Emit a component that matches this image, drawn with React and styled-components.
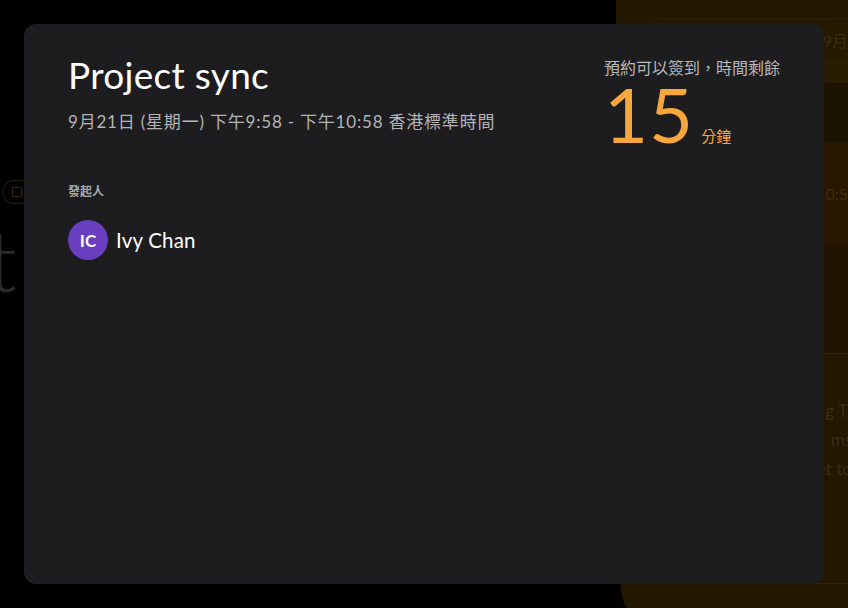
import React from 'react'
import styled, { createGlobalStyle } from 'styled-components'

const GlobalStyle = createGlobalStyle`
    html, body {
        margin: 0;
        padding: 0;
        background: #000;
    }
    body {
        font-family: Lato, "Noto Sans CJK TC", sans-serif;
    }
`;

const Scene = styled.div`
    width: 848px;
    height: 608px;
    display: flex;
    overflow: hidden;
    position: relative;
    background: #000;
`;

const MainArea = styled.div`
    flex: 1;
    display: flex;
    flex-direction: column;
    padding-top: 180px;
`;

const Pill = styled.div`
    width: 40px;
    height: 24px;
    margin-left: 2px;
    border: 1px solid #2a1f05;
    border-radius: 12px;
    display: flex;
    align-items: center;
    padding-left: 9px;
    box-sizing: border-box;
`;

const PillIcon = styled.div`
    width: 8px;
    height: 8px;
    border: 1.5px solid #3a2c0c;
    border-radius: 1px;
`;

const GhostText = styled.div`
    font-family: Lato, sans-serif;
    font-size: 84px;
    font-weight: 300;
    color: #2c2c2c;
    margin-left: -12px;
    line-height: 1;
    margin-top: 14px;
`;

const SidePanel = styled.div`
    width: 232px;
    background: #241700;
    border-bottom-left-radius: 12px 100px;
    display: flex;
    flex-direction: column;
    padding: 18px 0 0 28px;
    box-sizing: border-box;
    font-family: Lato, "Noto Sans CJK TC", sans-serif;
`;

const SideCard = styled.div`
    flex: 1;
    border: 1px solid #2e2108;
    border-right: none;
    border-radius: 16px 0 0 16px;
    margin-bottom: 24px;
    display: flex;
    flex-direction: column;
    overflow: hidden;
`;

const SideBand = styled.div`
    height: ${p => p.h}px;
    background: ${p => p.bg};
    color: #3a2c12;
    font-size: 16px;
    display: flex;
    align-items: center;
    justify-content: flex-end;
    white-space: nowrap;
`;

const SideLines = styled.div`
    border-top: 1px solid #33260d;
    padding-top: 46px;
    display: flex;
    flex-direction: column;
    align-items: flex-end;
    gap: 8px;
    color: #3a2c12;
    font-size: 17px;
    margin-right: -4px;
`;

const Overlay = styled.div`
    position: absolute;
    inset: 0;
    padding: 24px;
    box-sizing: border-box;
`;

const Modal = styled.div`
    width: 800px;
    height: 560px;
    background: #1d1d1f;
    border-radius: 12px;
    padding: 29px 44px;
    box-sizing: border-box;
    display: flex;
    flex-direction: column;
    color: #fff;
`;

const Header = styled.div`
    display: flex;
    justify-content: space-between;
    align-items: flex-start;
`;

const Title = styled.h1`
    margin: 0;
    font-family: Lato, "Noto Sans CJK TC", sans-serif;
    font-weight: 400;
    font-size: 37px;
    line-height: 1.2;
    letter-spacing: 0.3px;
    color: #fff;
`;

const Subtitle = styled.div`
    margin-top: 14px;
    font-family: Lato, "Noto Sans CJK TC", sans-serif;
    font-size: 17px;
    letter-spacing: 0.8px;
    color: #b4b4b6;
    line-height: 1.3;
`;

const Countdown = styled.div`
    display: flex;
    flex-direction: column;
    align-items: flex-start;
    padding-top: 3px;
`;

const CountLabel = styled.div`
    font-family: "Noto Sans CJK TC", sans-serif;
    font-size: 16px;
    color: #b8b8ba;
    line-height: 22px;
`;

const CountRow = styled.div`
    display: flex;
    align-items: flex-end;
    margin-top: -2px;
`;

const CountNumber = styled.span`
    font-family: Lato, sans-serif;
    font-weight: 400;
    font-size: 76px;
    line-height: 76px;
    color: #f7a63b;
    letter-spacing: 1px;
`;

const CountUnit = styled.span`
    font-family: "Noto Sans CJK TC", sans-serif;
    font-size: 15px;
    color: #f7a63b;
    margin-left: 7px;
    margin-bottom: 6px;
`;

const SectionLabel = styled.div`
    margin-top: 30px;
    font-family: "Noto Sans CJK TC", sans-serif;
    font-weight: 700;
    font-size: 12px;
    color: #a9a9ab;
`;

const Person = styled.div`
    display: flex;
    align-items: center;
    gap: 8px;
    margin-top: 21px;
`;

const Avatar = styled.div`
    width: 40px;
    height: 40px;
    border-radius: 50%;
    background: #6a3fbf;
    color: #fff;
    font-family: Lato, sans-serif;
    font-weight: 700;
    font-size: 17px;
    display: flex;
    align-items: center;
    justify-content: center;
`;

const PersonName = styled.span`
    font-family: Lato, sans-serif;
    font-size: 20.5px;
    letter-spacing: 0.2px;
    color: #fff;
`;

const App = () => (
    <>
        <GlobalStyle />
        <Scene>
            <MainArea>
                <Pill><PillIcon /></Pill>
                <GhostText>t</GhostText>
            </MainArea>
            <SidePanel>
                <SideCard>
                    <SideBand h={42} bg="#261900">9月</SideBand>
                    <SideBand h={22} bg="#2a1c02" />
                    <SideBand h={60} bg="#1c1300" />
                    <SideBand h={100} bg="#2a1700">下午10:5</SideBand>
                    <SideBand h={110} bg="#221500" />
                    <SideLines>
                        <span>g Ti</span>
                        <span>ms</span>
                        <span>et to</span>
                    </SideLines>
                </SideCard>
            </SidePanel>
            <Overlay>
                <Modal>
                    <Header>
                        <div>
                            <Title>Project sync</Title>
                            <Subtitle>9月21日 (星期一) 下午9:58 - 下午10:58 香港標準時間</Subtitle>
                        </div>
                        <Countdown>
                            <CountLabel>預約可以簽到，時間剩餘</CountLabel>
                            <CountRow>
                                <CountNumber>15</CountNumber>
                                <CountUnit>分鐘</CountUnit>
                            </CountRow>
                        </Countdown>
                    </Header>
                    <SectionLabel>發起人</SectionLabel>
                    <Person>
                        <Avatar>IC</Avatar>
                        <PersonName>Ivy Chan</PersonName>
                    </Person>
                </Modal>
            </Overlay>
        </Scene>
    </>
)

export default App
